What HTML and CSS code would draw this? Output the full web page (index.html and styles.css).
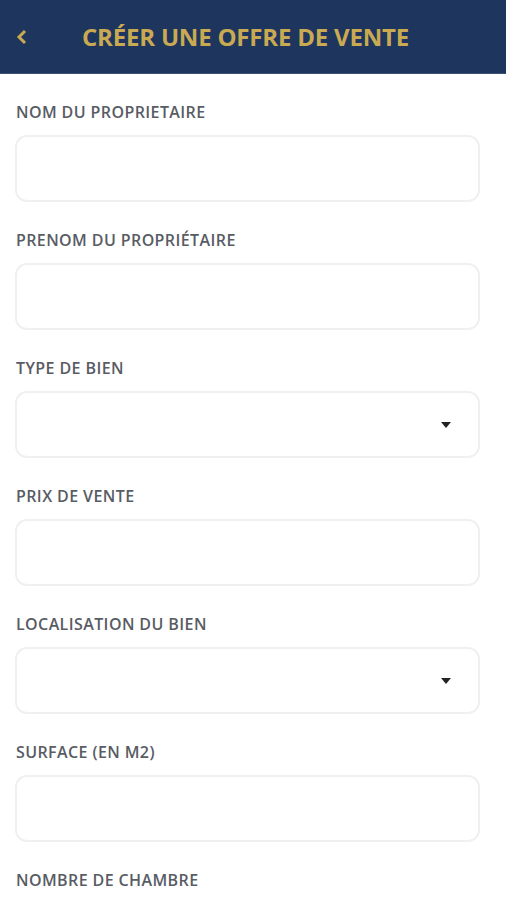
FILE: index.html
```html
<!DOCTYPE html>
<html lang="fr">
<head>
  <meta charset="UTF-8" />
  <meta name="viewport" content="width=device-width, initial-scale=1.0"/>
  <title>Créer une offre de vente</title>
  <link rel="stylesheet" href="styles.css">
</head>
<body>

  <header class="topbar">
    <a class="back">
      <svg width="12" height="16" viewBox="0 0 12 16"><path d="M9 2 L3 8 L9 14" fill="none" stroke="#c9aa52" stroke-width="3"/></svg>
    </a>
    <h1>CRÉER UNE OFFRE DE VENTE</h1>
  </header>

  <form class="offer-form">
    <div class="field">
      <label>NOM DU PROPRIETAIRE</label>
      <input type="text">
    </div>
    <div class="field">
      <label>PRENOM DU PROPRIÉTAIRE</label>
      <input type="text">
    </div>
    <div class="field">
      <label>TYPE DE BIEN</label>
      <div class="select"><span class="caret"></span></div>
    </div>
    <div class="field">
      <label>PRIX DE VENTE</label>
      <input type="text">
    </div>
    <div class="field">
      <label>LOCALISATION DU BIEN</label>
      <div class="select"><span class="caret"></span></div>
    </div>
    <div class="field">
      <label>SURFACE (EN M2)</label>
      <input type="text">
    </div>
    <div class="field">
      <label>NOMBRE DE CHAMBRE</label>
      <input type="text">
    </div>
  </form>

</body>
</html>
```

FILE: styles.css
```css
* {
  margin: 0;
  padding: 0;
  box-sizing: border-box;
}
body {
  font-family: 'Open Sans', sans-serif;
  background: #fff;
  color: #555;
}
.topbar {
  background: #1e355e;
  height: 74px;
  display: flex;
  align-items: center;
  padding-left: 16px;
  border-bottom: 1px solid #3b4f74;
}
.back {
  display: flex;
  width: 66px;
}
.topbar h1 {
  font-size: 24px;
  font-weight: 700;
  color: #c9aa52;
  letter-spacing: -0.2px;
}
.offer-form {
  padding: 28px 26px 0 15px;
  display: flex;
  flex-direction: column;
  gap: 28px;
}
.field label {
  display: block;
  font-size: 16px;
  font-weight: 600;
  line-height: 20px;
  letter-spacing: 0.4px;
  color: #585c64;
  padding-left: 1px;
  margin-bottom: 13px;
}
.field input, .select {
  display: block;
  width: 100%;
  height: 67px;
  border: 2px solid #f0f0f0;
  border-radius: 12px;
  background: #fff;
  outline: none;
}
.select {
  display: flex;
  align-items: center;
  justify-content: flex-end;
  padding-right: 27px;
}
.caret {
  width: 0;
  height: 0;
  border-left: 5px solid transparent;
  border-right: 5px solid transparent;
  border-top: 6px solid #222;
}
```
